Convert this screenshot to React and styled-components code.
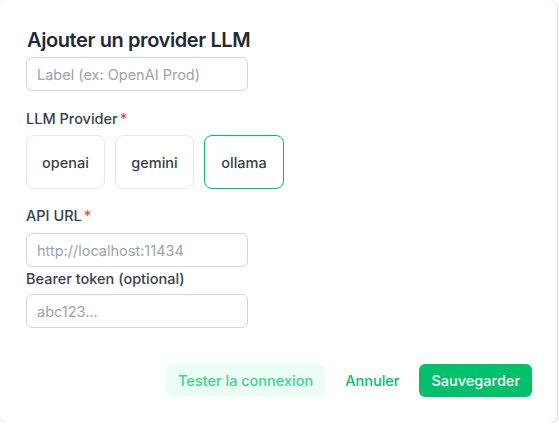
import React from "react";
import styled, { createGlobalStyle } from "styled-components";

const Global = createGlobalStyle`
  html, body { margin: 0; padding: 0; background: #ffffff; }
  body { font-family: Inter, "Noto Sans", "Liberation Sans", sans-serif; }
  * { box-sizing: border-box; }
`;

const Dialog = styled.div`
  width: 557px;
  height: 423px;
  background: #ffffff;
  border-radius: 8px;
  box-shadow: 0 0 0 1px rgba(0,0,0,0.04), 1px 1px 3px rgba(0,0,0,0.12);
  padding: 28px 25px 0 26px;
  display: flex;
  flex-direction: column;
`;

const Title = styled.h2`
  margin: 0 0 5px 1px;
  font-size: 20px;
  line-height: 24px;
  font-weight: 600;
  color: #1f2937;
  letter-spacing: -0.4px;
`;

const Input = styled.input`
  width: 222px;
  height: 34px;
  border: 1px solid #d1d5db;
  border-radius: 6px;
  padding: 0 10px;
  font-family: inherit;
  font-size: 14.5px;
  color: #1f2937;
  background: #fff;
  outline: none;
  &::placeholder { color: #9ca3af; }
`;

const Label = styled.div`
  font-size: 14.5px;
  font-weight: 500;
  color: #374151;
  line-height: 20px;
  margin-top: ${(p) => p.$mt || 0}px;
  margin-bottom: ${(p) => p.$mb || 0}px;
`;

const Star = styled.span`
  color: #ef4444;
  margin-left: 2px;
`;

const ProviderRow = styled.div`
  display: flex;
  gap: 10px;
`;

const ProviderButton = styled.button`
  width: ${(p) => p.$w}px;
  height: 54px;
  border-radius: 8px;
  border: 1px solid ${(p) => (p.$active ? "#00c16a" : "#e5e7eb")};
  background: #fff;
  font-family: inherit;
  font-size: 14.5px;
  font-weight: 500;
  color: #374151;
  cursor: pointer;
`;

const Footer = styled.div`
  display: flex;
  justify-content: flex-end;
  align-items: center;
  gap: 10px;
  margin-top: 36px;
`;

const Btn = styled.button`
  height: 33px;
  border-radius: 6px;
  border: none;
  padding: 0 ${(p) => p.$px || 11}px;
  font-family: inherit;
  font-size: 14.5px;
  font-weight: 500;
  cursor: pointer;
  background: ${(p) => p.$bg};
  color: ${(p) => p.$color};
`;

export default function App() {
  return (
    <>
      <Global />
      <Dialog>
        <Title>Ajouter un provider LLM</Title>
        <Input placeholder="Label (ex: OpenAI Prod)" />
        <Label $mt={18} $mb={6}>
          LLM Provider<Star>*</Star>
        </Label>
        <ProviderRow>
          <ProviderButton $w={79}>openai</ProviderButton>
          <ProviderButton $w={79}>gemini</ProviderButton>
          <ProviderButton $w={80} $active>ollama</ProviderButton>
        </ProviderRow>
        <Label $mt={17} $mb={7}>
          API URL<Star>*</Star>
        </Label>
        <Input placeholder="http://localhost:11434" />
        <Label $mt={2} $mb={5}>Bearer token (optional)</Label>
        <Input placeholder="abc123..." />
        <Footer>
          <Btn $bg="#ecfdf5" $color="#3ed58a" $px={12}>Tester la connexion</Btn>
          <Btn $bg="transparent" $color="#00c16a" $px={10}>Annuler</Btn>
          <Btn $bg="#00c16a" $color="#ffffff" $px={12}>Sauvegarder</Btn>
        </Footer>
      </Dialog>
    </>
  );
}
